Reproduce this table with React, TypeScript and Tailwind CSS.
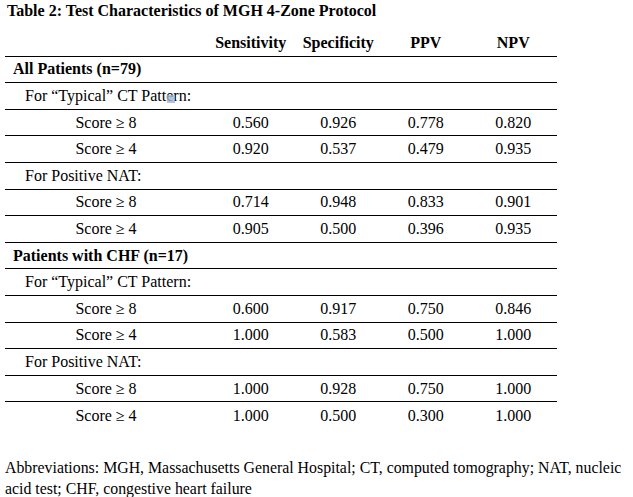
type Row =
  | { kind: 'section'; label: string }
  | { kind: 'group'; label: string }
  | { kind: 'score'; label: string; values: string[] };

const rows: Row[] = [
  { kind: 'section', label: 'All Patients (n=79)' },
  { kind: 'group', label: 'For \u201CTypical\u201D CT Pattern:' },
  { kind: 'score', label: 'Score \u2265 8', values: ['0.560', '0.926', '0.778', '0.820'] },
  { kind: 'score', label: 'Score \u2265 4', values: ['0.920', '0.537', '0.479', '0.935'] },
  { kind: 'group', label: 'For Positive NAT:' },
  { kind: 'score', label: 'Score \u2265 8', values: ['0.714', '0.948', '0.833', '0.901'] },
  { kind: 'score', label: 'Score \u2265 4', values: ['0.905', '0.500', '0.396', '0.935'] },
  { kind: 'section', label: 'Patients with CHF (n=17)' },
  { kind: 'group', label: 'For \u201CTypical\u201D CT Pattern:' },
  { kind: 'score', label: 'Score \u2265 8', values: ['0.600', '0.917', '0.750', '0.846'] },
  { kind: 'score', label: 'Score \u2265 4', values: ['1.000', '0.583', '0.500', '1.000'] },
  { kind: 'group', label: 'For Positive NAT:' },
  { kind: 'score', label: 'Score \u2265 8', values: ['1.000', '0.928', '0.750', '1.000'] },
  { kind: 'score', label: 'Score \u2265 4', values: ['1.000', '0.500', '0.300', '1.000'] },
];

const headers = ['Sensitivity', 'Specificity', 'PPV', 'NPV'];

function BodyRow({ row, last }: { row: Row; last: boolean }) {
  const line = last ? '' : 'border-b border-black';
  if (row.kind === 'score') {
    return (
      <div className={`flex h-[26.6px] items-center ${line}`}>
        <div className="w-[202px] text-center">{row.label}</div>
        {row.values.map((v, i) => (
          <div key={i} className="w-[87.5px] text-center">
            {v}
          </div>
        ))}
      </div>
    );
  }
  return (
    <div
      className={`flex h-[26.6px] items-center ${line} ${
        row.kind === 'section' ? 'pl-[8px] font-bold' : 'pl-[20px]'
      }`}
    >
      {row.label}
    </div>
  );
}

export default function App() {
  return (
    <div
      className="relative h-[497px] w-[633px] overflow-hidden bg-white px-[5px] text-[16px] leading-[20px] text-black"
      style={{ fontFamily: '"Liberation Serif", "Times New Roman", serif' }}
    >
      <div className="pt-[1px] pl-[2px] font-bold">
        Table 2: Test Characteristics of MGH 4-Zone Protocol
      </div>

      <div className="mt-[9px] w-[552px]">
        <div className="flex h-[26.6px] items-center border-b border-black font-bold">
          <div className="w-[202px]" />
          {headers.map((h) => (
            <div key={h} className="w-[87.5px] text-center">
              {h}
            </div>
          ))}
        </div>
        {rows.map((r, i) => (
          <BodyRow key={i} row={r} last={i === rows.length - 1} />
        ))}
      </div>

      <p className="mt-[28px] w-[626px] text-[15.85px] leading-[21px]">
        Abbreviations: MGH, Massachusetts General Hospital; CT, computed tomography; NAT, nucleic
        acid test; CHF, congestive heart failure
      </p>

      {/* stray selection marker over "Pattern" */}
      <div className="absolute left-[167px] top-[95px] h-[8px] w-[8px] bg-[#9db6cf] opacity-80" />
    </div>
  );
}
